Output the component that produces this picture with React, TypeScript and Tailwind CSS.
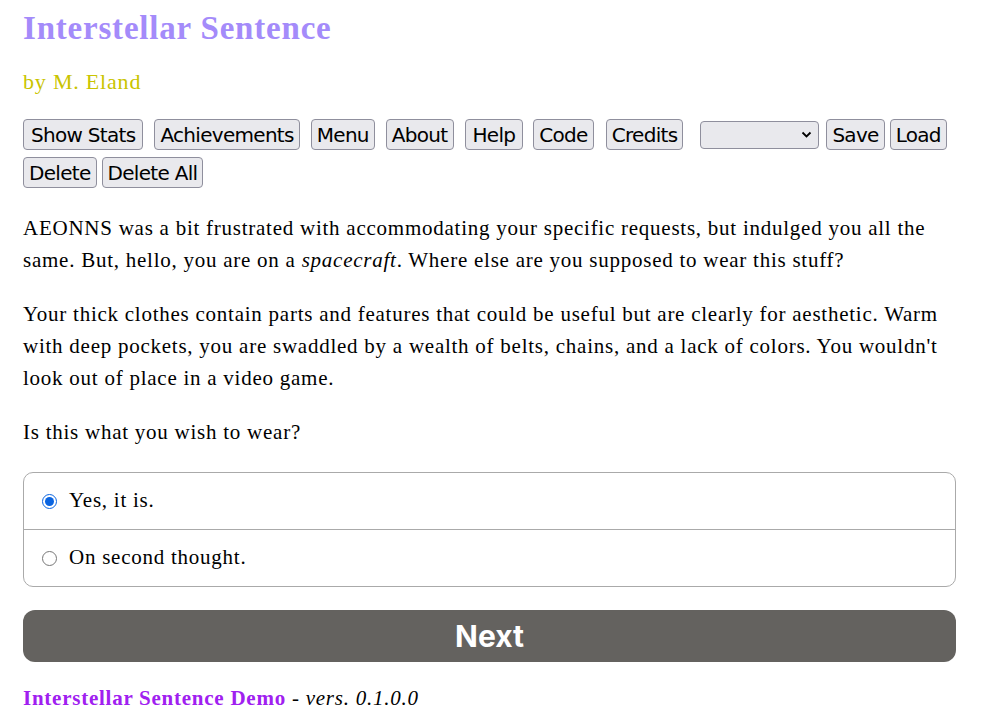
import React, { useState } from "react";

const serif = { fontFamily: '"Liberation Serif", "DejaVu Serif", serif', letterSpacing: "0.75px" };

function Btn({ label, className = "" }: { label: string; className?: string }) {
  return (
    <button
      className={`h-[31px] rounded-[4px] border border-[#8f8f9d] bg-[#e9e9ed] px-[5px] text-[20px] leading-none text-black ${className}`}
      style={{ fontFamily: '"DejaVu Sans", Verdana, sans-serif', letterSpacing: "-0.035em" }}
    >
      {label}
    </button>
  );
}

export default function App() {
  const [choice, setChoice] = useState("yes");
  return (
    <div className="min-h-[717px] bg-white pl-[23px] pr-[28px] pt-[10px] text-black" style={serif}>
      <h1 className="text-[33px] font-bold leading-[36px] tracking-[0.8px] text-[#a48bfa]">Interstellar Sentence</h1>
      <p className="mt-[21px] text-[22px] leading-[30px] tracking-[0.8px] text-[#c9c400]">by M. Eland</p>

      <div className="mt-[22px] flex items-center">
        <Btn label="Show Stats" className="mr-[11px] px-[7px]" />
        <Btn label="Achievements" className="mr-[11px]" />
        <Btn label="Menu" className="mr-[11px]" />
        <Btn label="About" className="mr-[11px]" />
        <Btn label="Help" className="mr-[10px] px-[7px]" />
        <Btn label="Code" className="mr-[12px]" />
        <Btn label="Credits" />
        <div className="ml-[17px] mr-[7px] flex h-[28px] w-[119px] items-center justify-end rounded-[4px] border border-[#8f8f9d] bg-[#e9e9ed] pr-[6px]">
          <svg width="11" height="7" viewBox="0 0 11 7" fill="none">
            <path d="M1.5 1.5 L5.5 5.5 L9.5 1.5" stroke="#000" strokeWidth="1.8" />
          </svg>
        </div>
        <Btn label="Save" className="mr-[5px]" />
        <Btn label="Load" />
      </div>
      <div className="mt-[7px] flex items-center">
        <Btn label="Delete" className="mr-[5px]" />
        <Btn label="Delete All" />
      </div>

      <div className="mt-[24px] text-[21px] leading-[32px]">
        <p>
          AEONNS was a bit frustrated with accommodating your specific requests, but indulged you all the same. But, hello, you are on a <em>spacecraft</em>. Where else are you supposed to wear this stuff?
        </p>
        <p className="mt-[22px]">
          Your thick clothes contain parts and features that could be useful but are clearly for aesthetic. Warm with deep pockets, you are swaddled by a wealth of belts, chains, and a lack of colors. You wouldn't look out of place in a video game.
        </p>
        <p className="mt-[22px]">Is this what you wish to wear?</p>
      </div>

      <div className="mt-[24px] overflow-hidden rounded-[10px] border border-[#aaaaaa]">
        {[
          { id: "yes", label: "Yes, it is.", h: "h-[56px]" },
          { id: "no", label: "On second thought.", h: "h-[57px]" },
        ].map((o, i) => (
          <label
            key={o.id}
            className={`flex ${o.h} cursor-pointer items-center pl-[18px] text-[21px] ${i > 0 ? "border-t border-[#aaaaaa]" : ""}`}
          >
            <input
              type="radio"
              name="wear"
              checked={choice === o.id}
              onChange={() => setChoice(o.id)}
              className="m-0 h-[15px] w-[15px] accent-[#0a64e0]"
            />
            <span className="ml-[12px]">{o.label}</span>
          </label>
        ))}
      </div>

      <button
        className="mt-[23px] flex h-[52px] w-full items-center justify-center rounded-[12px] bg-[#64625f] text-[30px] font-bold tracking-normal text-white"
        style={{ fontFamily: 'Inter, Roboto, "Liberation Sans", sans-serif' }}
      >
        Next
      </button>

      <p className="mt-[22px] text-[21px] leading-[28px]">
        <span className="font-bold text-[#a020f0]">Interstellar Sentence Demo</span>
        <span> - </span>
        <em>vers. 0.1.0.0</em>
      </p>
    </div>
  );
}
